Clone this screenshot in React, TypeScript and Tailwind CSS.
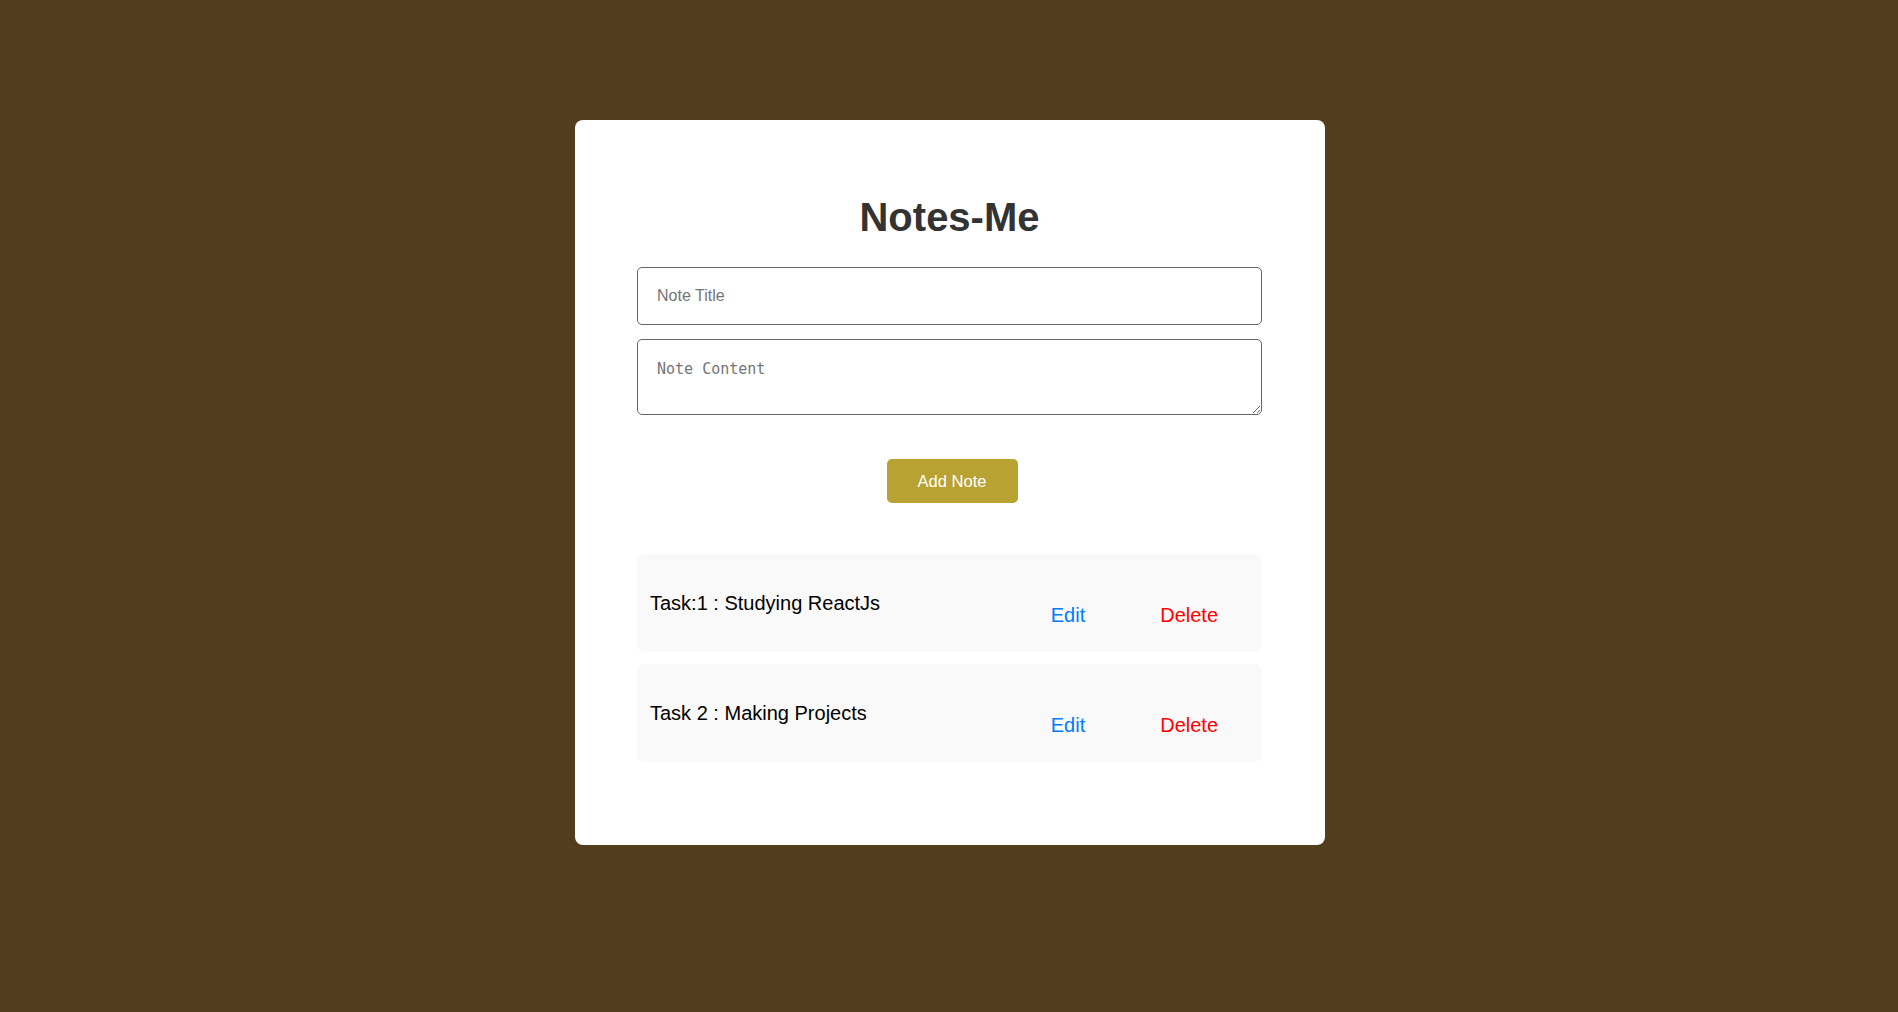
import React, { useState } from "react";

interface Note {
  id: number;
  title: string;
}

const initialNotes: Note[] = [
  { id: 1, title: "Task:1 : Studying ReactJs" },
  { id: 2, title: "Task 2 : Making Projects" },
];

const NoteItem: React.FC<{ note: Note; onDelete: () => void }> = ({
  note,
  onDelete,
}) => {
  return (
    <div className="h-[98px] bg-[#f9f9f9] rounded-[8px] flex items-center justify-between pl-[13px]">
      <p className="text-[20px] leading-[23px] text-black">{note.title}</p>
      <div className="flex gap-[75px] pr-[44px] pt-[25px]">
        <button className="text-[20px] leading-[23px] text-[#007bff]">
          Edit
        </button>
        <button
          onClick={onDelete}
          className="text-[20px] leading-[23px] text-[#ff0000]"
        >
          Delete
        </button>
      </div>
    </div>
  );
};

export default function App() {
  const [notes, setNotes] = useState<Note[]>(initialNotes);
  const [title, setTitle] = useState("");
  const [content, setContent] = useState("");

  const addNote = () => {
    if (!title.trim()) return;
    setNotes([...notes, { id: Date.now(), title }]);
    setTitle("");
    setContent("");
  };

  return (
    <div
      className="min-h-[1012px] bg-[#523e1c] flex justify-center pt-[120px] pl-[2px]"
      style={{ fontFamily: '"Liberation Sans", Arial, sans-serif' }}
    >
      <div className="w-[750px] h-fit bg-white rounded-[8px] pl-[62px] pr-[63px] pt-[74px] pb-[83px] flex flex-col">
        <h1 className="text-[40px] leading-[46px] font-bold text-[#333] text-center">
          Notes-Me
        </h1>
        <input
          value={title}
          onChange={(e) => setTitle(e.target.value)}
          placeholder="Note Title"
          className="mt-[27px] h-[58px] w-full border border-[#666] rounded-[5px] pl-[19px] text-[16px] outline-none placeholder:text-[#757575]"
        />
        <textarea
          value={content}
          onChange={(e) => setContent(e.target.value)}
          placeholder="Note Content"
          className="mt-[14px] h-[76px] w-full border border-[#666] rounded-[5px] pl-[19px] pt-[18px] text-[15px] outline-none placeholder:text-[#757575]"
          style={{ fontFamily: '"DejaVu Sans Mono", monospace' }}
        />
        <div className="mt-[44px] flex justify-center">
          <button
            onClick={addNote}
            className="h-[44px] w-[131px] ml-[5px] bg-[#b8a232] text-white text-[16.5px] rounded-[5px]"
          >
            Add Note
          </button>
        </div>
        <div className="mt-[51px] flex flex-col gap-[12px]">
          {notes.map((n) => (
            <NoteItem
              key={n.id}
              note={n}
              onDelete={() => setNotes(notes.filter((x) => x.id !== n.id))}
            />
          ))}
        </div>
      </div>
    </div>
  );
}
